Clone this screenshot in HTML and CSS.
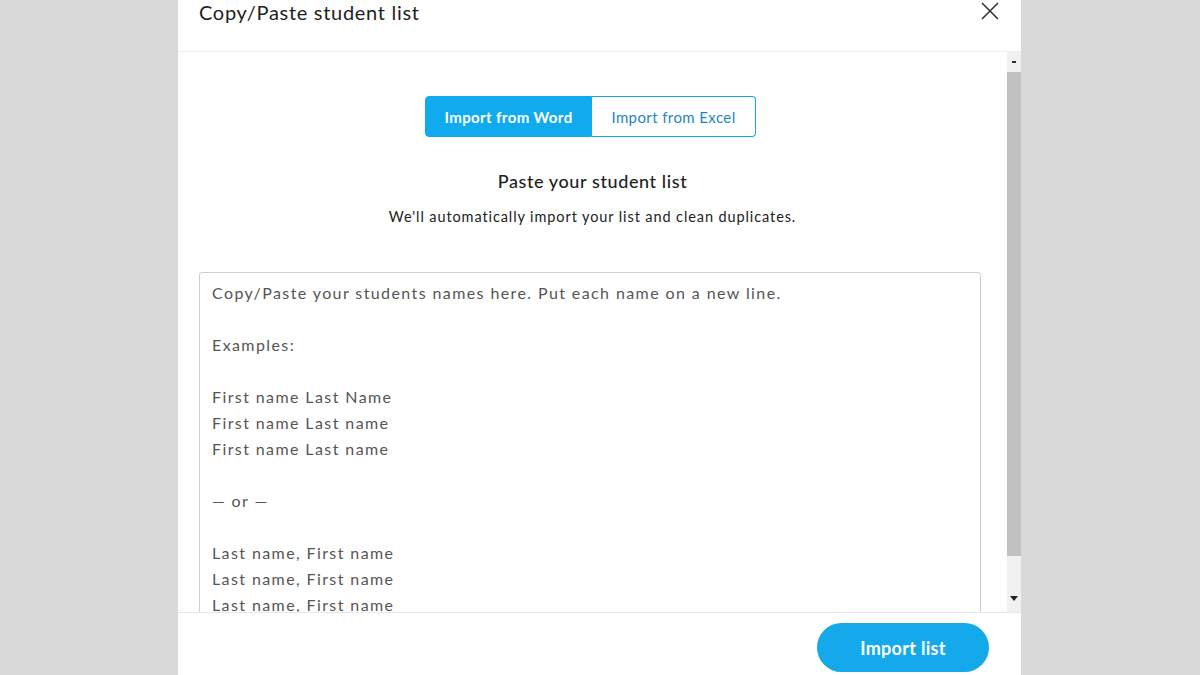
FILE: index.html
```html
<!DOCTYPE html>
<html>
<head>
<meta charset="utf-8">
<link rel="stylesheet" href="styles.css">
</head>
<body>
<div class="modal">
  <div class="header">
    <div class="title">Copy/Paste student list</div>
    <svg class="close" width="18" height="18" viewBox="0 0 18 18"><path d="M1 1 L17 17 M17 1 L1 17" stroke="#333" stroke-width="1.6" fill="none"/></svg>
  </div>
  <div class="body">
    <div class="content">
      <div class="tabs">
        <div class="tab active">Import from Word</div>
        <div class="tab">Import from Excel</div>
      </div>
      <div class="heading">Paste your student list</div>
      <div class="sub">We'll automatically import your list and clean duplicates.</div>
      <div class="area">Copy/Paste your students names here. Put each name on a new line.

Examples:

First name Last Name
First name Last name
First name Last name

— or —

Last name, First name
Last name, First name
Last name, First name</div>
    </div>
    <div class="scrollbar">
      <div class="sb-up"><span class="dash"></span></div>
      <div class="sb-thumb"></div>
      <div class="sb-track"></div>
      <div class="sb-down"><svg width="8" height="5" viewBox="0 0 8 5"><path d="M0 0 H8 L4 5 Z" fill="#222"/></svg></div>
    </div>
  </div>
  <div class="footer">
    <div class="btn">Import list</div>
  </div>
</div>
</body>
</html>
```

FILE: styles.css
```css
html, body {
  margin: 0;
  padding: 0;
  background: #d9d9d9;
  font-family: "Lato", "Open Sans", sans-serif;
}
.modal {
  margin-left: 178px;
  width: 843px;
  height: 675px;
  background: #fff;
  display: flex;
  flex-direction: column;
  overflow: hidden;
}
.header {
  height: 51px;
  border-bottom: 1px solid #efefef;
  display: flex;
  justify-content: space-between;
  align-items: flex-start;
  padding: 0 21px 0 21px;
  flex: none;
}
.title {
  font-size: 20px;
  line-height: 24px;
  color: #1e1e1e;
  letter-spacing: 0.7px;
}
.close {
  margin-top: 2px;
  margin-right: 1px;
}
.body {
  height: 560px;
  display: flex;
  flex: none;
}
.content {
  flex: 1;
  overflow: hidden;
  display: flex;
  flex-direction: column;
  align-items: center;
  padding-top: 44px;
}
.tabs {
  display: flex;
  margin-left: -4px;
}
.tab {
  height: 39px;
  width: 163px;
  border: 1px solid #14a8ea;
  display: flex;
  align-items: center;
  justify-content: center;
  font-size: 15px;
  color: #1d86c0;
  letter-spacing: 0.4px;
}
.tab.active {
  background: #0fabee;
  color: #fff;
  font-weight: 700;
  width: 165px;
  border-radius: 4px 0 0 4px;
}
.tab:last-child {
  border-radius: 0 4px 4px 0;
  border-left: none;
}
.heading {
  margin-top: 32px;
  font-size: 18px;
  line-height: 24px;
  color: #1e1e1e;
  font-weight: 500;
  letter-spacing: 0.6px;
}
.sub {
  margin-top: 14px;
  font-size: 14.5px;
  line-height: 20px;
  color: #222;
  letter-spacing: 0.9px;
}
.area {
  margin-top: 45px;
  align-self: flex-start;
  margin-left: 21px;
  width: 756px;
  border: 1px solid #cfcfcf;
  border-radius: 3px;
  padding: 7px 12px 8px;
  white-space: pre-line;
  font-size: 16px;
  line-height: 26px;
  color: #555;
  letter-spacing: 1.4px;
}
.scrollbar {
  width: 14px;
  flex: none;
  background: #f1f1f1;
  display: flex;
  flex-direction: column;
}
.sb-up {
  height: 20px;
  display: flex;
  justify-content: center;
  align-items: center;
}
.dash {
  width: 4px;
  height: 2px;
  background: #333;
}
.sb-thumb {
  height: 484px;
  background: #c1c1c1;
}
.sb-track {
  flex: 1;
}
.sb-down {
  height: 28px;
  display: flex;
  justify-content: center;
  align-items: center;
}
.footer {
  flex: 1;
  border-top: 1px solid #e6e6e6;
  display: flex;
  justify-content: flex-end;
  align-items: flex-start;
  padding: 10px 32px 0 0;
}
.btn {
  width: 172px;
  height: 49px;
  border-radius: 25px;
  background: #13a9ea;
  color: #fff;
  font-weight: 700;
  font-size: 18px;
  display: flex;
  align-items: center;
  justify-content: center;
  letter-spacing: 0.3px;
}
```
